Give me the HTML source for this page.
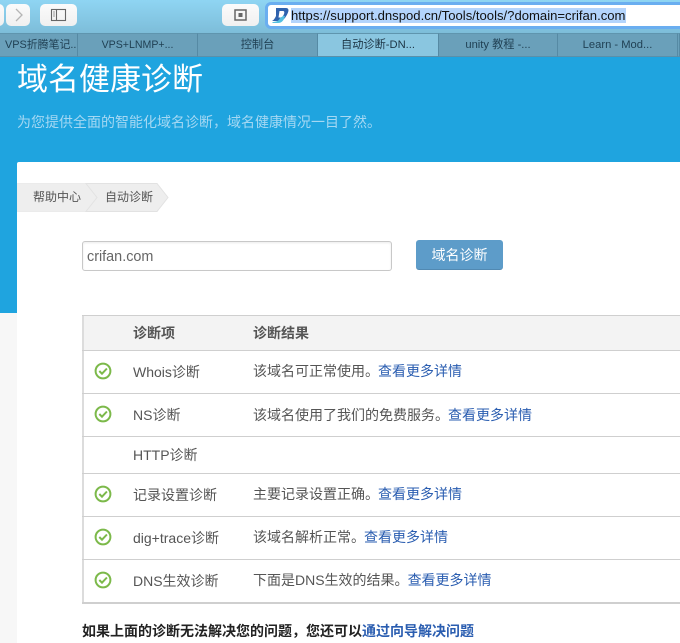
<!DOCTYPE html>
<html><head><meta charset="utf-8">
<style>
*{box-sizing:border-box}
html,body{margin:0;padding:0}
body{width:680px;height:643px;position:relative;overflow:hidden;background:#fff;font-family:"Liberation Sans","Noto Sans CJK SC",sans-serif;color:#555}
.a{position:absolute;white-space:nowrap}
.btn{position:absolute;background:linear-gradient(#fbfbfb,#f0f0f0);border-radius:5px;top:4px;height:22px}
.tab{position:absolute;top:33px;height:24px;background:#6aa0ba;border-right:1px solid #568aa4;border-top:1px solid #5f95ae;border-bottom:1px solid #5a90aa;color:#1f3f52;font-size:11.2px;line-height:22px;text-align:center;white-space:nowrap;overflow:hidden}
.line{position:absolute;left:82px;width:598px;height:1px;background:#cfcfcf}
.t{position:absolute;white-space:nowrap;font-size:14px;line-height:20px;color:#555}
.t a{color:#2a5db0;text-decoration:none}
svg.c{position:absolute;left:94px;width:18px;height:18px}
</style></head><body>
<div class="a" style="left:0;top:0;width:680px;height:33px;background:linear-gradient(#8fd5f3,#7dbdd9)"></div>
<div class="btn" style="left:-10px;width:14px"></div>
<div class="btn" style="left:6px;width:24px"><svg width="24" height="22" style="position:absolute;left:0;top:0"><path d="M10 5l6 6-6 6" fill="none" stroke="#b5b5b5" stroke-width="1.3"/></svg></div>
<div class="btn" style="left:40px;width:37px"><svg width="37" height="22" style="position:absolute;left:0;top:0"><rect x="11.500" y="5.500" width="14" height="11" fill="none" stroke="#666" stroke-width="1.100"/><path d="M16.500 5.500v11" stroke="#666" stroke-width="1.100"/><path d="M13 8h2M13 10h2M13 12h2" stroke="#999" stroke-width="1"/></svg></div>
<div class="btn" style="left:222px;width:37px"><svg width="37" height="22" style="position:absolute;left:0;top:0"><rect x="13" y="6" width="11" height="10" fill="none" stroke="#666" stroke-width="1.500"/><rect x="16.500" y="9" width="4" height="4" fill="#666"/></svg></div>
<div class="a" style="left:265px;top:2px;width:430px;height:27px;background:#fff;border:3px solid #6aaef0;border-radius:6px"></div>
<svg class="a" style="left:271px;top:7px" width="18" height="17"><path d="M5 1h10c2.500 0 3 2 2 4.500S13 14 9 14H1c2-1 3-3 4-5z" fill="#2f62ad"/><path d="M1 15c4 0 7-1 8-4l1-3 4 1c-1 4-3 7-7 7H2z" fill="#55bfe0"/><path d="M8.500 4h3.500c1.500 0 1.500 1.500 1 3s-2 3.500-4 3.500H7.500z" fill="#fff"/></svg>
<div class="a" style="left:291px;top:8px;width:335px;height:15px;background:#b3d4fc"></div>
<div class="a" style="left:291px;top:7px;font-size:13.100px;line-height:17px;color:#111">https://support.dnspod.cn/Tools/tools/?domain=crifan.com</div>

<div class="tab" style="left:0;width:78px;font-size:10.900px;text-align:left;padding-left:5px">VPS折腾笔记...</div>
<div class="tab" style="left:78px;width:120px;font-size:10.600px">VPS+LNMP+...</div>
<div class="tab" style="left:198px;width:120px">控制台</div>
<div class="tab" style="left:318px;width:121px;background:#8ac6e0;color:#1c3444">自动诊断-DN...</div>
<div class="tab" style="left:439px;width:119px">unity 教程 -...</div>
<div class="tab" style="left:558px;width:120px">Learn - Mod...</div>
<div class="tab" style="left:678px;width:2px"></div>

<div class="a" style="left:0;top:57px;width:680px;height:256px;background:#1fa4df"></div>
<div class="a" style="left:0;top:313px;width:17px;height:330px;background:#f7f7f7"></div>
<div class="a" style="left:17px;top:60px;font-size:31px;line-height:40px;color:#fff">域名健康诊断</div>
<div class="a" style="left:17px;top:112px;font-size:14px;line-height:20px;color:#a5d8f3">为您提供全面的智能化域名诊断，域名健康情况一目了然。</div>
<div class="a" style="left:17px;top:162px;width:663px;height:481px;background:#fff;border-top-left-radius:2px"></div>

<svg class="a" style="left:17px;top:183px" width="152" height="30">
<path d="M0 .5H69L80 14.500 69 28.500H0z" fill="#eee" stroke="#ebebeb"/>
<path d="M69 .5H140L151 14.500 140 28.500H69L80 14.500z" fill="#eee" stroke="#e2e2e2"/>
</svg>
<div class="a" style="left:33px;top:187px;font-size:12px;line-height:20px;color:#555">帮助中心</div>
<div class="a" style="left:105px;top:187px;font-size:12px;line-height:20px;color:#555">自动诊断</div>

<div class="a" style="left:82px;top:241px;width:310px;height:30px;border:1px solid #c8c8c8;border-radius:3px;box-shadow:inset 0 1px 2px rgba(0,0,0,.08);background:#fff"></div>
<div class="a" style="left:87px;top:248px;font-size:14.400px;line-height:18px;color:#666">crifan.com</div>
<div class="a" style="left:416px;top:240px;width:87px;height:30px;background:#5d9cc9;border-radius:3px;border-bottom:1px solid #5189b2;color:#fff;font-size:14px;line-height:30px;text-align:center">域名诊断</div>

<div class="a" style="left:82px;top:316px;width:598px;height:34px;background:#f3f3f3"></div>
<div class="a" style="left:82px;top:315px;width:2px;height:289px;background:#dcdcdc"></div>
<div class="line" style="top:315px"></div>
<div class="line" style="top:350px"></div>
<div class="line" style="top:393px"></div>
<div class="line" style="top:436px"></div>
<div class="line" style="top:473px"></div>
<div class="line" style="top:516px"></div>
<div class="line" style="top:559px"></div>
<div class="line" style="top:602px;height:2px"></div>

<div class="t" style="left:133px;top:323px;font-weight:bold">诊断项</div>
<div class="t" style="left:253px;top:323px;font-weight:bold">诊断结果</div>

<svg class="c" style="top:362px" viewBox="0 0 18 18"><circle cx="9" cy="9" r="7.400" fill="none" stroke="#7cb94a" stroke-width="2"/><path d="M5.300 9l2.700 2.700 4.900-5.200" fill="none" stroke="#7cb94a" stroke-width="2"/></svg>
<div class="t" style="left:133px;top:362px">Whois诊断</div>
<div class="t" style="left:253px;top:361px">该域名可正常使用。<a style="margin-left:-1px">查看更多详情</a></div>

<svg class="c" style="top:405px" viewBox="0 0 18 18"><circle cx="9" cy="9" r="7.400" fill="none" stroke="#7cb94a" stroke-width="2"/><path d="M5.300 9l2.700 2.700 4.900-5.200" fill="none" stroke="#7cb94a" stroke-width="2"/></svg>
<div class="t" style="left:133px;top:405px">NS诊断</div>
<div class="t" style="left:253px;top:405px">该域名使用了我们的免费服务。<a style="margin-left:-1px">查看更多详情</a></div>

<div class="t" style="left:133px;top:445px">HTTP诊断</div>

<svg class="c" style="top:485px" viewBox="0 0 18 18"><circle cx="9" cy="9" r="7.400" fill="none" stroke="#7cb94a" stroke-width="2"/><path d="M5.300 9l2.700 2.700 4.900-5.200" fill="none" stroke="#7cb94a" stroke-width="2"/></svg>
<div class="t" style="left:133px;top:485px">记录设置诊断</div>
<div class="t" style="left:253px;top:484px">主要记录设置正确。<a style="margin-left:-1px">查看更多详情</a></div>

<svg class="c" style="top:528px" viewBox="0 0 18 18"><circle cx="9" cy="9" r="7.400" fill="none" stroke="#7cb94a" stroke-width="2"/><path d="M5.300 9l2.700 2.700 4.900-5.200" fill="none" stroke="#7cb94a" stroke-width="2"/></svg>
<div class="t" style="left:133px;top:528px">dig+trace诊断</div>
<div class="t" style="left:253px;top:527px">该域名解析正常。<a style="margin-left:-1px">查看更多详情</a></div>

<svg class="c" style="top:571px" viewBox="0 0 18 18"><circle cx="9" cy="9" r="7.400" fill="none" stroke="#7cb94a" stroke-width="2"/><path d="M5.300 9l2.700 2.700 4.900-5.200" fill="none" stroke="#7cb94a" stroke-width="2"/></svg>
<div class="t" style="left:133px;top:571px">DNS生效诊断</div>
<div class="t" style="left:253px;top:570px">下面是DNS生效的结果。<a style="margin-left:-1px">查看更多详情</a></div>

<div class="t" style="left:82px;top:621px;font-weight:bold;color:#222">如果上面的诊断无法解决您的问题，您还可以<a style="color:#2a5db0">通过向导解决问题</a></div>
</body></html>
